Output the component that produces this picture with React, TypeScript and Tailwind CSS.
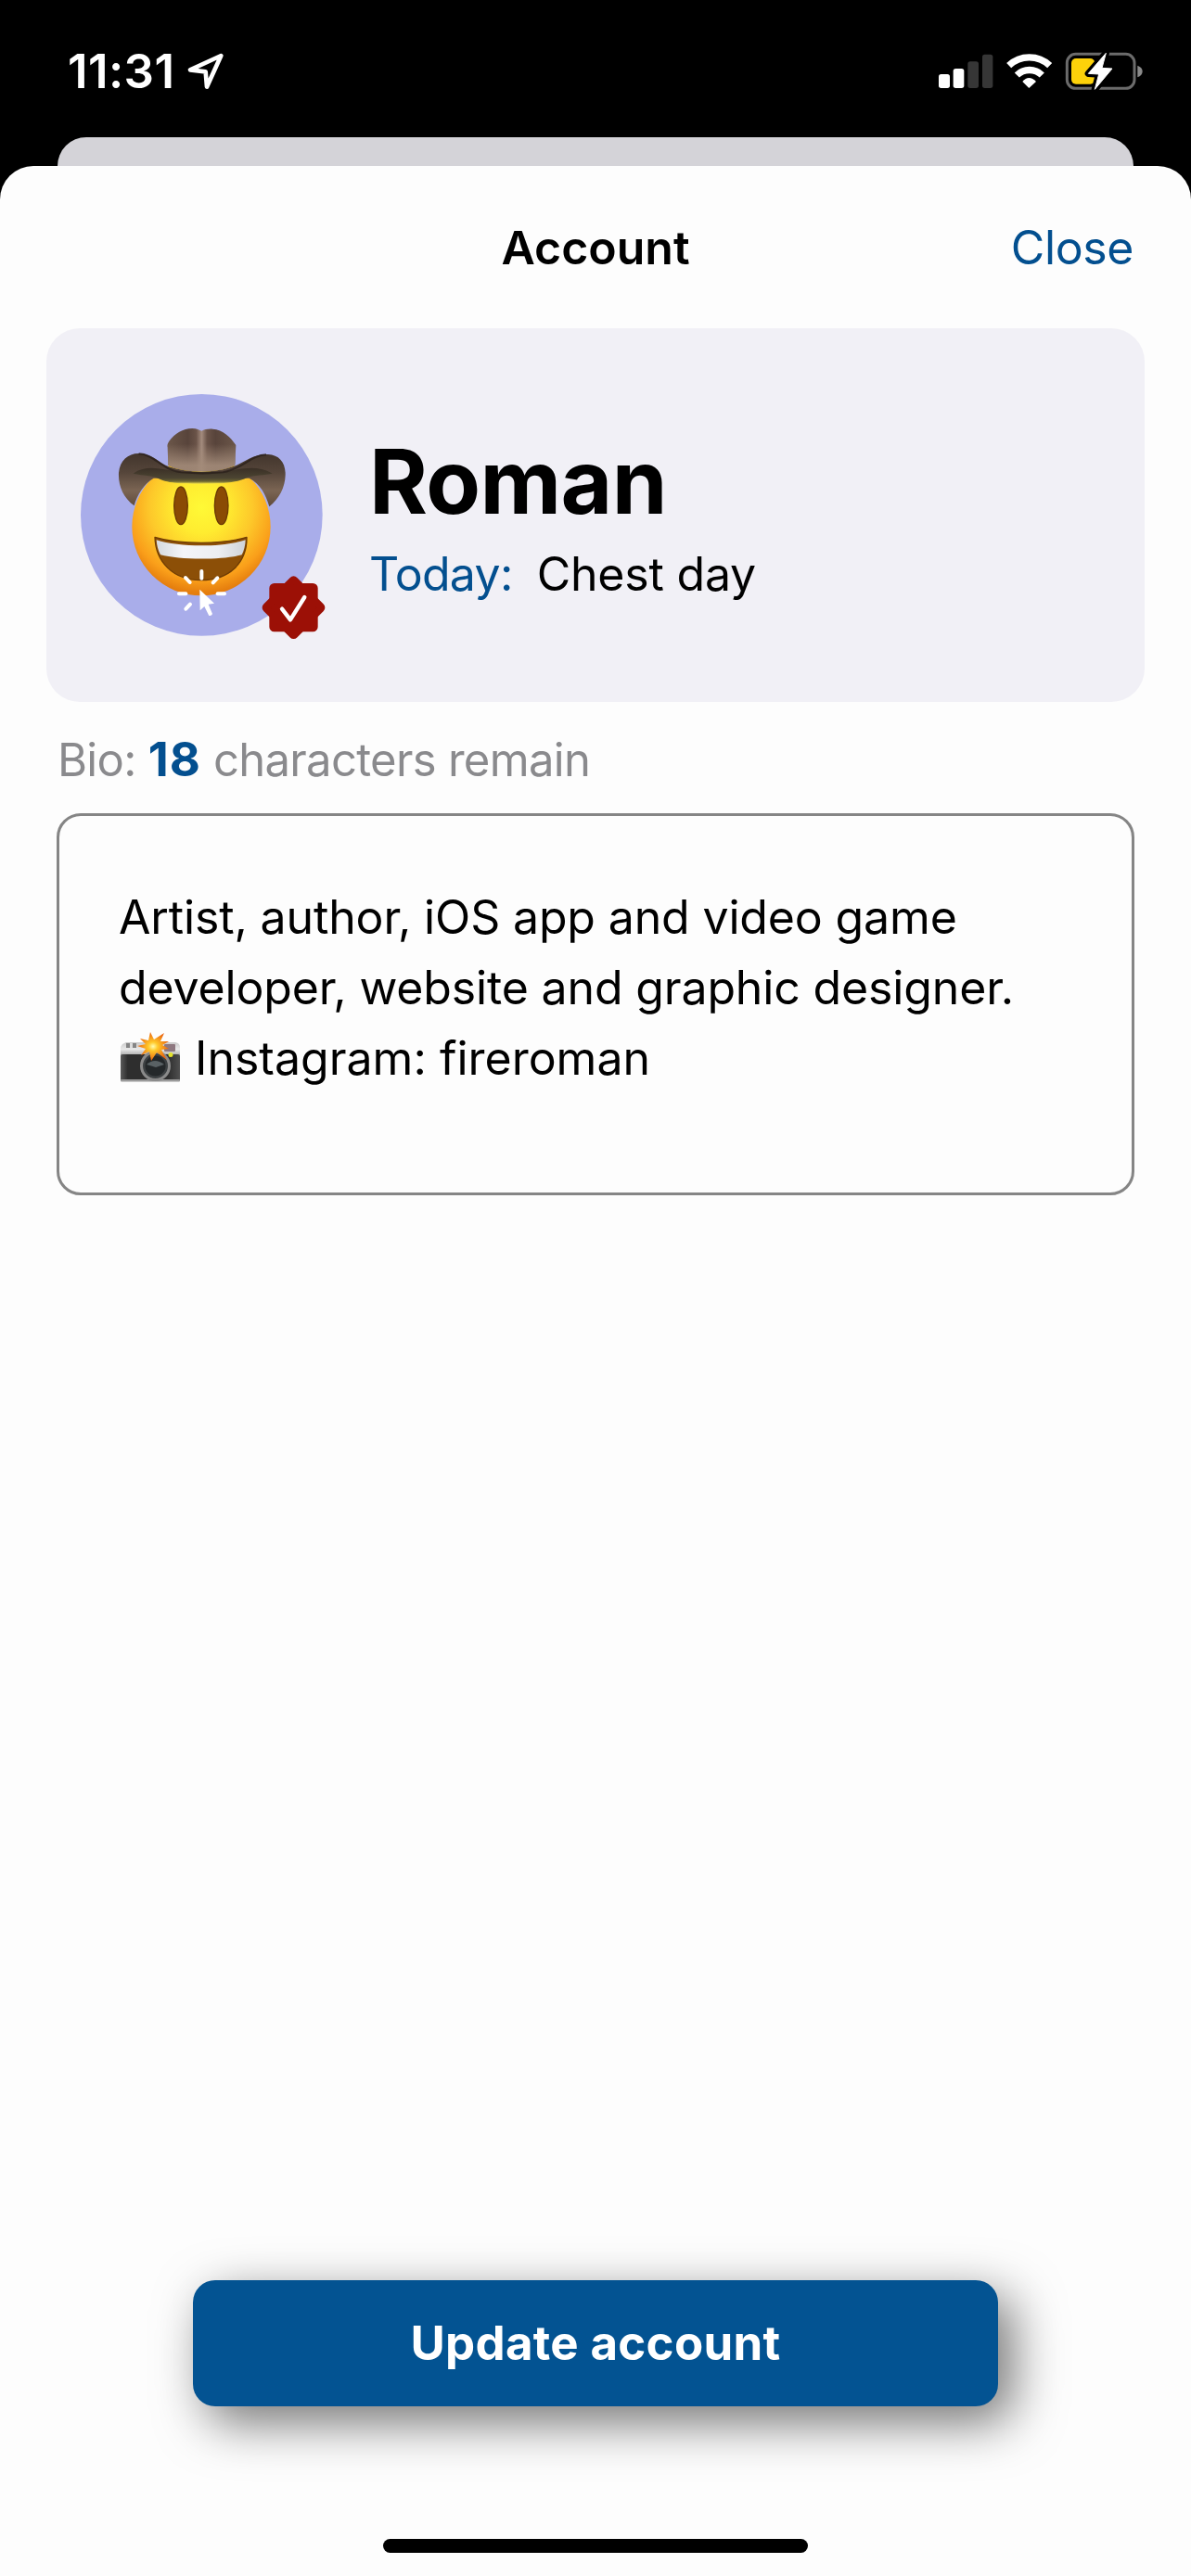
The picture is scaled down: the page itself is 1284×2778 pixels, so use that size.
import { useState } from "react";

const BIO_LIMIT = 119;

function LocationArrow() {
  return (
    <svg viewBox="600 168 132 132" className="h-11 w-11">
      <path
        d="M715 183 L615 229 L665 235 L669 284 Z"
        fill="none"
        stroke="#fff"
        strokeWidth="14"
        strokeLinejoin="round"
      />
    </svg>
  );
}

function SignalIcon() {
  return (
    <svg viewBox="156 165 180 135" className="h-[45px] w-[60px]">
      <rect x="156" y="240" width="36" height="45" rx="8" fill="#fff" />
      <rect x="203" y="222" width="35" height="63" rx="8" fill="#fff" />
      <rect x="250" y="199" width="35" height="86" rx="8" fill="#363636" />
      <rect x="297" y="176" width="34" height="109" rx="8" fill="#363636" />
    </svg>
  );
}

function WifiIcon() {
  return (
    <svg viewBox="372 165 153 135" className="ml-3 h-[45px] w-[51px]">
      <g fill="none" stroke="#fff" strokeWidth="22">
        <path d="M383 212 A96 96 0 0 1 515 212" />
        <path d="M409 243 A58 58 0 0 1 490 243" />
      </g>
      <path d="M448 285 L427 264 Q437 252 448 252 Q460 252 471 264 Z" fill="#fff" />
    </svg>
  );
}

function BatteryIcon() {
  return (
    <svg viewBox="564 165 255 135" className="ml-[13px] h-[45px] w-[85px]">
      <rect x="571" y="175" width="218" height="111" rx="28" fill="none" stroke="#6b6b6b" strokeWidth="9" />
      <path d="M799 212 Q815 218 815 231 Q815 244 799 250 Z" fill="#8a8a8a" />
      <rect x="585" y="189" width="76" height="83" rx="15" fill="#fdd20a" />
      <path
        d="M697 172 L640 238 L674 240 L661 289 L717 222 L684 220 Z"
        fill="#000"
        stroke="#000"
        strokeWidth="22"
        strokeLinejoin="round"
      />
      <path
        d="M697 172 L640 238 L674 240 L661 289 L717 222 L684 220 Z"
        fill="#fff"
        stroke="#fff"
        strokeWidth="3"
        strokeLinejoin="round"
      />
    </svg>
  );
}

function StatusBar() {
  return (
    <div className="flex h-[148px] items-center justify-between pt-[6px] pr-[51px] pl-[73px] text-white">
      <div className="flex items-center">
        <span className="w-[127px] text-[51px] leading-[60px] font-semibold tracking-[0.4px] whitespace-nowrap">11:31</span>
        <LocationArrow />
      </div>
      <div className="flex items-center">
        <SignalIcon />
        <WifiIcon />
        <BatteryIcon />
      </div>
    </div>
  );
}

// cowboy avatar with the tap cursor and the verified badge
function Avatar() {
  return (
    <svg viewBox="80 73 810 795" className="mt-1 h-[265px] w-[270px] shrink-0">
      <defs>
        <radialGradient id="face" cx="0.5" cy="0.36" r="0.62">
          <stop offset="0" stopColor="#fff936" />
          <stop offset="0.3" stopColor="#ffec30" />
          <stop offset="0.6" stopColor="#fdc82a" />
          <stop offset="0.85" stopColor="#fa9f1a" />
          <stop offset="1" stopColor="#e57e0e" />
        </radialGradient>
        <linearGradient id="crown" x1="0" y1="0" x2="1" y2="0">
          <stop offset="0" stopColor="#6b5649" />
          <stop offset="0.3" stopColor="#58443b" />
          <stop offset="0.42" stopColor="#6a5348" />
          <stop offset="0.5" stopColor="#a38b7d" />
          <stop offset="0.58" stopColor="#6a5348" />
          <stop offset="0.7" stopColor="#58443b" />
          <stop offset="1" stopColor="#6b5649" />
        </linearGradient>
        <linearGradient id="crownGlow" x1="0" y1="0" x2="0" y2="1">
          <stop offset="0.1" stopColor="#a38b79" stopOpacity="0" />
          <stop offset="0.8" stopColor="#a38b79" stopOpacity="0.9" />
        </linearGradient>
        <linearGradient id="brim" x1="0" y1="0" x2="0" y2="1">
          <stop offset="0" stopColor="#42352c" />
          <stop offset="0.35" stopColor="#55453a" />
          <stop offset="0.7" stopColor="#7b6553" />
          <stop offset="1" stopColor="#5f4a3b" />
        </linearGradient>
        <linearGradient id="brimUnder" x1="0" y1="0" x2="0" y2="1">
          <stop offset="0" stopColor="#3a2f26" />
          <stop offset="0.65" stopColor="#4c4532" />
          <stop offset="0.85" stopColor="#6d6631" />
          <stop offset="1" stopColor="#e6d64a" />
        </linearGradient>
        <linearGradient id="teeth" x1="0" y1="0" x2="1" y2="0">
          <stop offset="0" stopColor="#d5d8de" />
          <stop offset="0.3" stopColor="#f4f5f8" />
          <stop offset="0.7" stopColor="#eceef2" />
          <stop offset="1" stopColor="#cfd3d9" />
        </linearGradient>
      </defs>
      <circle cx="471" cy="464" r="391" fill="#a9adea" />

      <ellipse cx="470" cy="502" rx="224" ry="223" fill="url(#face)" />
      <path
        d="M253 434 C218 408 201 370 203 328 C207 288 232 265 268 265 C310 266 332 294 365 308 C430 330 515 330 580 305 C615 290 640 266 686 268 C722 270 743 294 742 335 C741 375 722 412 690 437 C680 400 660 362 625 345 L316 345 C285 362 262 400 253 434 Z"
        fill="url(#brim)"
      />
      <path
        d="M250 330 C290 300 340 315 400 325 L540 325 C600 315 650 300 700 330 C675 335 640 335 618 343 C580 362 540 363 471 363 C400 363 360 362 324 343 C300 335 270 335 250 330 Z"
        fill="url(#brimUnder)"
      />
      <path
        d="M363 303 L361 245 C359 237 362 232 366 225 C385 200 410 184 441 184 C455 184 464 190 471 192 C480 188 490 185 507 186 C540 188 565 212 582 238 L579 302 C540 330 410 330 363 303 Z"
        fill="url(#crown)"
      />
      <path d="M363 303 L361 225 L582 238 L579 302 C540 330 410 330 363 303 Z" fill="url(#crownGlow)" />
      <path
        d="M268 266 C320 268 340 318 405 326 C450 330 500 330 540 326 C600 318 630 270 680 269"
        fill="none"
        stroke="#2b211c"
        strokeWidth="6"
        opacity="0.8"
      />

      <ellipse cx="404" cy="434" rx="22" ry="61" fill="#8a4b04" stroke="#6b3a05" strokeWidth="4" />
      <ellipse cx="535" cy="434" rx="22" ry="61" fill="#8a4b04" stroke="#6b3a05" strokeWidth="4" />
      <path
        d="M320 536 C400 560 540 560 617 536 C618 620 560 675 469 675 C378 675 322 615 320 536 Z"
        fill="#8c4f07"
        stroke="#6f3c04"
        strokeWidth="4"
        strokeLinejoin="round"
      />
      <path
        d="M325 545 C400 569 540 569 613 545 C613 560 608 580 601 593 C540 610 400 610 338 593 C330 578 326 562 325 545 Z"
        fill="url(#teeth)"
      />

      <g stroke="#fff" strokeWidth="12" strokeLinecap="round">
        <path d="M471 646 V669" />
        <path d="M419 667 L433 682" />
        <path d="M522 668 L508 683" />
        <path d="M398 719 H420" />
        <path d="M523 719 H545" />
        <path d="M420 768 L434 753" />
      </g>
      <path d="M465 705 L512 750 L493 753 L506 784 Q504 791 495 790 L480 760 L466 773 Z" fill="#fff" />

      <g fill="#9c1006" stroke="#9c1006" strokeWidth="24" strokeLinejoin="round">
        <rect x="702" y="697" width="133" height="133" rx="4" />
        <rect x="704" y="699" width="129" height="129" rx="4" transform="rotate(45 768.5 763.5)" />
      </g>
      <path
        d="M731 768 L758 803 L804 730"
        fill="none"
        stroke="#fff"
        strokeWidth="13"
        strokeLinecap="round"
        strokeLinejoin="round"
      />
    </svg>
  );
}

function CameraFlash() {
  return (
    <svg viewBox="0 0 64 54" className="-mt-2 mr-4 ml-[2px] inline-block h-[54px] w-16 align-[-8px]">
      <defs>
        <linearGradient id="cameraTop" x1="0" y1="0" x2="0" y2="1">
          <stop offset="0" stopColor="#c9c9c9" />
          <stop offset="0.5" stopColor="#e9e9e9" />
          <stop offset="1" stopColor="#a2a2a2" />
        </linearGradient>
        <linearGradient id="cameraBody" x1="0" y1="0" x2="1" y2="0">
          <stop offset="0" stopColor="#5a5a5a" />
          <stop offset="0.12" stopColor="#2e2e2e" />
          <stop offset="0.8" stopColor="#2e2e2e" />
          <stop offset="1" stopColor="#505050" />
        </linearGradient>
        <radialGradient id="flash">
          <stop offset="0" stopColor="#fffcb0" />
          <stop offset="0.3" stopColor="#ffc92a" />
          <stop offset="1" stopColor="#ea640e" />
        </radialGradient>
      </defs>
      <path d="M2 13 L6 11 H59 Q64 12 64 16 V26 H0 V16 Z" fill="url(#cameraTop)" />
      <rect x="6" y="12" width="11" height="5" fill="#858585" />
      <rect x="10" y="12" width="3" height="5" fill="#dcdcdc" />
      <rect x="47" y="13" width="12" height="8" rx="1" fill="#8e7880" />
      <rect y="24" width="64" height="29" rx="2" fill="url(#cameraBody)" />
      <rect y="51" width="64" height="2.5" rx="1" fill="#9a9a9a" />
      <circle cx="37.5" cy="36.5" r="15" fill="#3d4143" stroke="#8a8a8a" strokeWidth="3" />
      <circle cx="37.5" cy="36.5" r="11" fill="#24282a" />
      <path d="M28 35 Q37 27 47 35 L38 38 Z" fill="#596164" />
      <circle cx="54" cy="24.5" r="2.5" fill="#e4e32b" />
      <path
        d="M32 0 L36 8 L47 1 L43 10 L52 10 L45 14 L52 18 L44 19 L50 30 L39 22 L33 31 L31 21 L22 25 L27 18 L18 15 L27 13 L21 7 L30 9 Z"
        fill="url(#flash)"
      />
    </svg>
  );
}

export default function App() {
  const [bio] = useState({
    text: "Artist, author, iOS app and video game developer, website and graphic designer.",
    instagram: "fireroman",
  });
  // the last line counts too
  const remain = BIO_LIMIT - bio.text.length - `📸 Instagram: ${bio.instagram}`.length + 1;

  return (
    <div className="flex h-[2778px] w-[1284px] flex-col bg-black font-['Inter',sans-serif] text-[50px] leading-[60px] text-black">
      <StatusBar />
      <div className="mx-[62px] h-[31px] shrink-0 rounded-t-[31px] bg-[#d4d3d8]" />

      <main className="flex grow flex-col rounded-t-[36px] bg-[#fdfdfd]">
        <header className="grid h-[175px] shrink-0 grid-cols-3 items-center px-[62px]">
          <h1 className="col-start-2 text-center font-semibold">Account</h1>
          <button className="text-right tracking-[-0.4px] text-[#034f8f]">Close</button>
        </header>

        <section className="mx-[50px] flex h-[403px] shrink-0 items-center rounded-[36px] bg-[#f1f0f6] pl-[37px]">
          <Avatar />
          <div className="mt-[6px] ml-[41px]">
            <h2 className="text-[96px] leading-[100px] font-bold tracking-[-0.6px]">Roman</h2>
            <p className="mt-[20px] flex gap-[26px]">
              <span className="tracking-[-0.7px] text-[#034f8f]">Today:</span>
              <span className="tracking-[-0.2px]">Chest day</span>
            </p>
          </div>
        </section>

        <p className="mt-8 ml-[62px] text-[49px] tracking-[-0.7px] text-[#8a8a8d]">
          Bio: <span className="text-[51px] font-bold tracking-[1px] text-[#034f8f]">{remain}</span> characters remain
        </p>

        <div className="mx-[61px] mt-[27px] h-[412px] shrink-0 rounded-[26px] border-[3px] border-[#858585] pt-[71px] pr-[100px] pl-[64px] leading-[76px]">
          <p className="tracking-[-0.15px]">{bio.text}</p>
          <p>
            <CameraFlash />
            Instagram: {bio.instagram}
          </p>
        </div>

        <button className="mt-auto h-[136px] w-[868px] shrink-0 self-center rounded-[24px] bg-[#035392] text-[51px] font-bold tracking-[0.3px] text-white shadow-[15px_17px_54px_rgba(0,0,0,0.55)]">
          Update account
        </button>
        <div className="mt-[143px] mb-[25px] h-[15px] w-[458px] shrink-0 self-center rounded-full bg-black" />
      </main>
    </div>
  );
}
